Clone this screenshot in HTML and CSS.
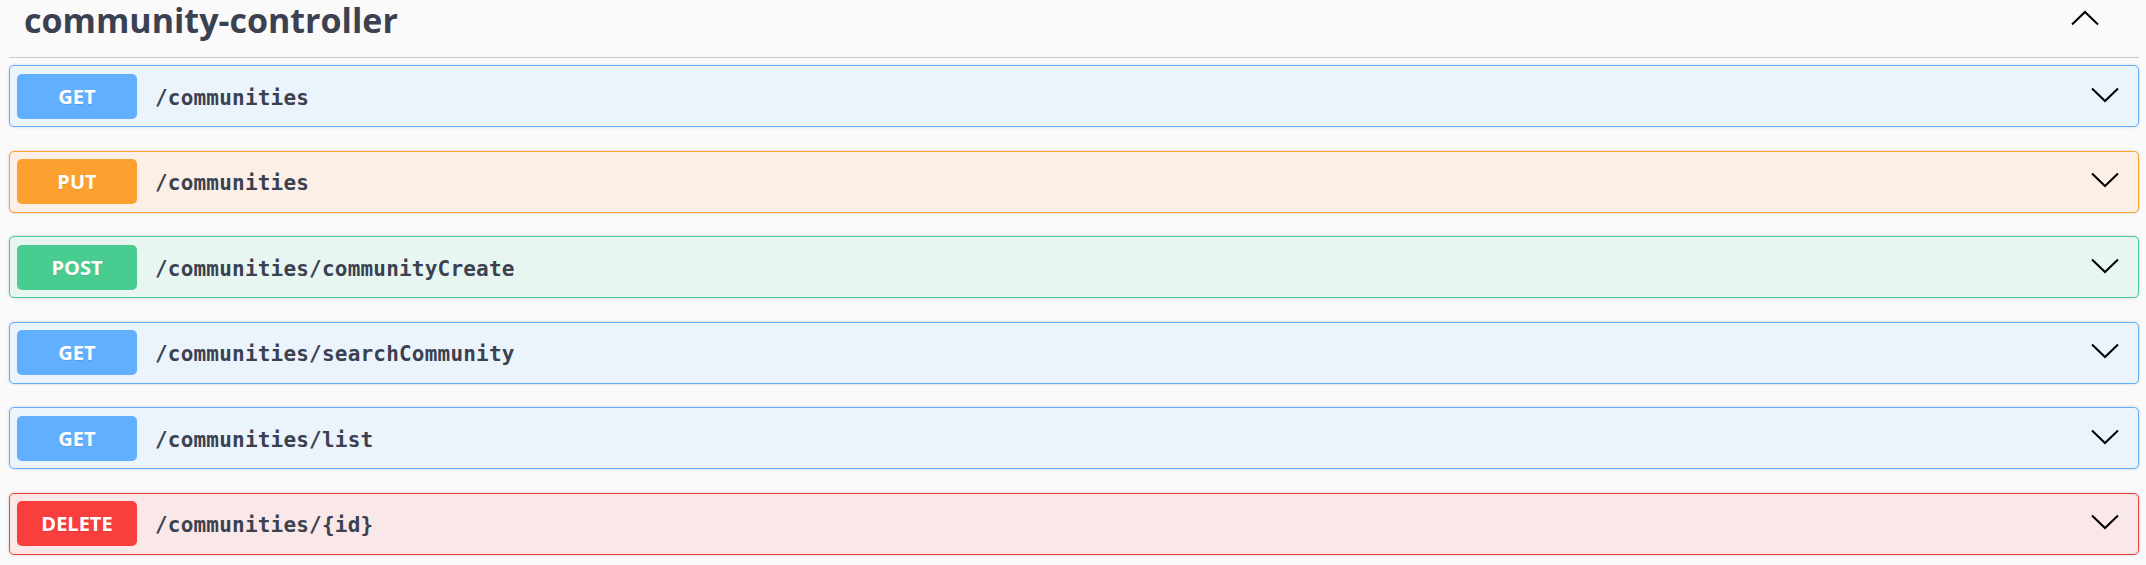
FILE: index.html
```html
<!DOCTYPE html>
<html>
<head>
<meta charset="utf-8">
<link rel="stylesheet" href="styles.css">
</head>
<body>
<div class="tag-section">
  <div class="tag-header">
    <h3 class="tag-title">community-controller</h3>
    <svg class="arrow-up" width="28" height="16" viewBox="0 0 28 16"><polyline points="1,14.5 14,2 27,14.5" fill="none" stroke="#000" stroke-width="2"/></svg>
  </div>
  <div class="ops">
    <div class="op op-get"><span class="method">GET</span><span class="path">/communities</span><svg class="chev" width="28" height="16" viewBox="0 0 28 16"><polyline points="1,1.5 14,14 27,1.5" fill="none" stroke="#000" stroke-width="2"/></svg></div>
    <div class="op op-put"><span class="method">PUT</span><span class="path">/communities</span><svg class="chev" width="28" height="16" viewBox="0 0 28 16"><polyline points="1,1.5 14,14 27,1.5" fill="none" stroke="#000" stroke-width="2"/></svg></div>
    <div class="op op-post"><span class="method">POST</span><span class="path">/communities/communityCreate</span><svg class="chev" width="28" height="16" viewBox="0 0 28 16"><polyline points="1,1.5 14,14 27,1.5" fill="none" stroke="#000" stroke-width="2"/></svg></div>
    <div class="op op-get"><span class="method">GET</span><span class="path">/communities/searchCommunity</span><svg class="chev" width="28" height="16" viewBox="0 0 28 16"><polyline points="1,1.5 14,14 27,1.5" fill="none" stroke="#000" stroke-width="2"/></svg></div>
    <div class="op op-get"><span class="method">GET</span><span class="path">/communities/list</span><svg class="chev" width="28" height="16" viewBox="0 0 28 16"><polyline points="1,1.5 14,14 27,1.5" fill="none" stroke="#000" stroke-width="2"/></svg></div>
    <div class="op op-delete"><span class="method">DELETE</span><span class="path">/communities/{id}</span><svg class="chev" width="28" height="16" viewBox="0 0 28 16"><polyline points="1,1.5 14,14 27,1.5" fill="none" stroke="#000" stroke-width="2"/></svg></div>
  </div>
</div>
</body>
</html>
```
FILE: styles.css
```css
html, body {
  margin: 0;
  padding: 0;
  background: #fafafa;
}
body {
  width: 2146px;
  height: 565px;
  overflow: hidden;
}
.tag-section {
  padding: 0 7px 0 9px;
}
.tag-header {
  display: flex;
  align-items: center;
  justify-content: space-between;
  height: 58px;
  border-bottom: 1px solid #c9cacd;
  box-sizing: border-box;
  padding: 0 40px 0 15px;
}
.tag-title {
  margin: 0;
  font-family: "Open Sans", sans-serif;
  font-weight: 700;
  font-size: 34px;
  color: #3b4151;
  margin-top: -18px;
}
.arrow-up {
  margin-top: -22px;
}
.ops {
  padding-top: 7px;
}
.op {
  display: flex;
  align-items: center;
  height: 62px;
  box-sizing: border-box;
  border: 1px solid;
  border-radius: 5px;
  margin-bottom: 23.6px;
  padding: 0 19px 0 7px;
  box-shadow: 0 0 3px rgba(0,0,0,0.19);
}
.method {
  width: 120px;
  height: 45px;
  border-radius: 5px;
  display: flex;
  align-items: center;
  justify-content: center;
  color: #fff;
  font-family: "Open Sans", sans-serif;
  font-weight: 700;
  font-size: 20px;
  text-shadow: 0 1px 0 rgba(0,0,0,0.1);
  flex: none;
}
.path {
  flex: 1;
  margin-left: 18px;
  font-family: "DejaVu Sans Mono", monospace;
  font-weight: 600;
  font-size: 21px;
  letter-spacing: 0.2px;
  color: #3b4151;
  padding-top: 3px;
}
.chev {
  flex: none;
  margin-top: -3px;
}
.op-get { background: #ebf3fb; border-color: #61affe; }
.op-get .method { background: #61affe; }
.op-put { background: #fcf0e6; border-color: #fca130; }
.op-put .method { background: #fca130; }
.op-post { background: #e7f6f0; border-color: #49cc90; }
.op-post .method { background: #49cc90; }
.op-delete { background: #fae7e7; border-color: #f93e3e; }
.op-delete .method { background: #f93e3e; }
```
